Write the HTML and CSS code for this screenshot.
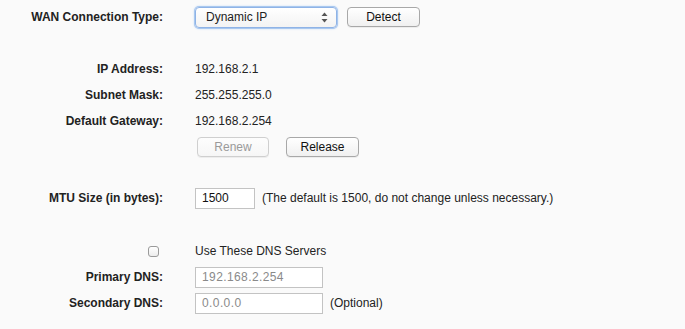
FILE: index.html
```html
<!DOCTYPE html>
<html>
<head>
<meta charset="utf-8">
<link rel="stylesheet" href="styles.css">
</head>
<body>
<div class="form">
  <div class="row row-top">
    <div class="label">WAN Connection Type:</div>
    <div class="value">
      <div class="select">
        <span class="select-text">Dynamic IP</span>
        <svg class="select-arrows" width="7" height="11" viewBox="0 0 7 11"><path d="M3.5 0.5 L6.5 4 L0.5 4 Z" fill="#555"/><path d="M3.5 10.5 L6.5 7 L0.5 7 Z" fill="#555"/></svg>
      </div>
      <button class="btn btn-detect">Detect</button>
    </div>
  </div>

  <div class="row row-ip">
    <div class="label">IP Address:</div>
    <div class="value">192.168.2.1</div>
  </div>
  <div class="row">
    <div class="label">Subnet Mask:</div>
    <div class="value">255.255.255.0</div>
  </div>
  <div class="row">
    <div class="label">Default Gateway:</div>
    <div class="value">192.168.2.254</div>
  </div>
  <div class="row">
    <div class="label"></div>
    <div class="value">
      <button class="btn btn-renew" disabled>Renew</button>
      <button class="btn btn-release">Release</button>
    </div>
  </div>

  <div class="row row-mtu">
    <div class="label">MTU Size (in bytes):</div>
    <div class="value">
      <input class="input input-mtu" type="text" value="1500">
      <span class="note">(The default is 1500, do not change unless necessary.)</span>
    </div>
  </div>

  <div class="row row-dns">
    <div class="label label-check"><span class="checkbox"></span></div>
    <div class="value">Use These DNS Servers</div>
  </div>
  <div class="row">
    <div class="label">Primary DNS:</div>
    <div class="value">
      <input class="input input-dns" type="text" value="192.168.2.254" disabled>
    </div>
  </div>
  <div class="row">
    <div class="label">Secondary DNS:</div>
    <div class="value">
      <input class="input input-dns" type="text" value="0.0.0.0" disabled>
      <span class="note">(Optional)</span>
    </div>
  </div>
</div>
</body>
</html>
```
FILE: styles.css
```css
html, body {
  margin: 0;
  padding: 0;
  background: #fafafa;
}
body {
  font-family: "Liberation Sans", Arial, sans-serif;
  font-size: 12px;
  color: #222;
  width: 685px;
  height: 329px;
  overflow: hidden;
}
.form {
  display: flex;
  flex-direction: column;
}
.row {
  display: flex;
  align-items: center;
  height: 26px;
}
.row-top {
  height: 34px;
}
.row-ip {
  margin-top: 22px;
}
.row-mtu {
  margin-top: 25px;
}
.row-dns {
  margin-top: 27px;
}
.label {
  width: 163px;
  text-align: right;
  font-weight: bold;
  flex: none;
}
.label-check {
  display: flex;
  justify-content: flex-end;
  padding-right: 4px;
  box-sizing: border-box;
}
.value {
  margin-left: 32px;
  display: flex;
  align-items: center;
}
.select {
  position: relative;
  width: 142px;
  height: 21px;
  box-sizing: border-box;
  border: 1px solid #8fb3e6;
  border-radius: 4px;
  background: linear-gradient(#ffffff, #f3f3f3);
  box-shadow: 0 0 0 1px #a9c8ef, 0 0 2px 1px #c5dbf6;
  display: flex;
  align-items: center;
  padding-left: 10px;
  font-size: 12px;
}
.select-arrows {
  position: absolute;
  right: 8px;
  top: 4px;
}
.btn {
  font-family: "Liberation Sans", Arial, sans-serif;
  font-size: 12px;
  color: #111;
  height: 20px;
  padding: 0;
  border: 1px solid #a8a8a8;
  border-radius: 4px;
  background: linear-gradient(#ffffff, #f0f0f0);
  box-shadow: 0 1px 0 rgba(0,0,0,0.05);
}
.btn-detect {
  width: 73px;
  margin-left: 10px;
  height: 20px;
}
.btn-renew {
  width: 72px;
  margin-left: 2px;
  color: #9a9a9a;
  border-color: #cfcfcf;
  background: linear-gradient(#fdfdfd, #f6f6f6);
}
.btn-release {
  width: 73px;
  margin-left: 17px;
}
.input {
  font-family: "Liberation Sans", Arial, sans-serif;
  height: 21px;
  box-sizing: border-box;
  border: 1px solid #c3c3c3;
  border-radius: 0;
  background: #fff;
  padding: 0 6px;
  margin: 0;
  outline: none;
}
.input-mtu {
  width: 60px;
  font-size: 12px;
  color: #111;
}
.input-dns {
  width: 128px;
  font-size: 12px;
  color: #8a8a8a;
  letter-spacing: 0.4px;
  -webkit-text-fill-color: #8a8a8a;
  opacity: 1;
}
.note {
  margin-left: 7px;
}
.checkbox {
  display: block;
  width: 11px;
  height: 11px;
  box-sizing: border-box;
  border: 1px solid #9a9a9a;
  border-radius: 3px;
  background: linear-gradient(#ffffff, #ececec);
}
```
